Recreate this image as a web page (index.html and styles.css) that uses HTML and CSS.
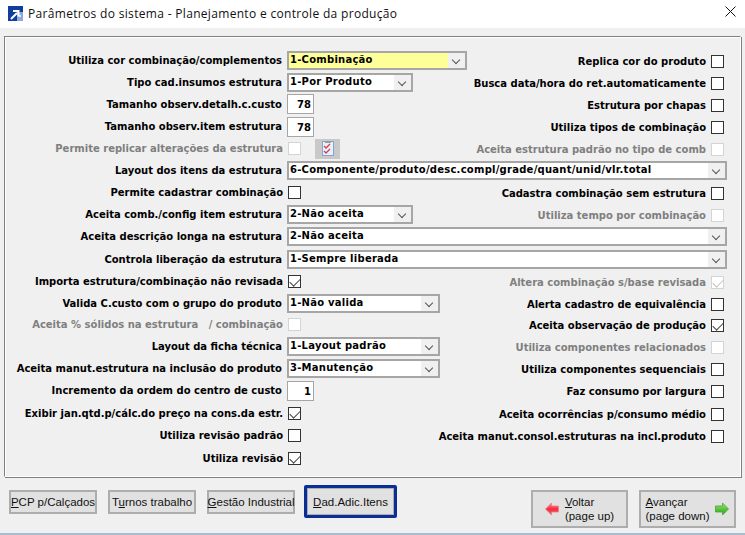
FILE: index.html
```html
<!DOCTYPE html>
<html lang="pt">
<head>
<meta charset="utf-8">
<title>Parâmetros do sistema</title>
<link rel="stylesheet" href="styles.css">
</head>
<body>
<div class="window">
  <header class="titlebar">
    <svg class="appicon" width="15" height="15" viewBox="0 0 15 15"><rect width="15" height="15" fill="#0f3f9e"/><rect x="9" y="6" width="6" height="9" fill="#8fa8d8"/><rect x="11" y="9" width="2" height="2" fill="#dfe8f6"/><path d="M3 13 L9 7 M5 5 H10.5 V10.5" fill="none" stroke="#fff" stroke-width="2"/></svg>
    <span class="title">Parâmetros do sistema - Planejamento e controle da produção</span>
    <svg class="close" width="11" height="11" viewBox="0 0 11 11"><path d="M0.5 0.5 L10.5 10.5 M10.5 0.5 L0.5 10.5" stroke="#111" stroke-width="1" fill="none"/></svg>
  </header>
  <main class="panel">
    <div class="form">
      <div class="left"><span class="lab">Utiliza cor combinação/complementos</span><div class="sel w180 yellow"><span class="val">1-Combinação</span><i class="arrow"></i></div></div>
      <div class="right"><span class="lab">Replica cor do produto</span><i class="cb"></i></div>

      <div class="left"><span class="lab">Tipo cad.insumos estrutura</span><div class="sel w126"><span class="val">1-Por Produto</span><i class="arrow"></i></div></div>
      <div class="right"><span class="lab">Busca data/hora do ret.automaticamente</span><i class="cb"></i></div>

      <div class="left"><span class="lab">Tamanho observ.detalh.c.custo</span><div class="num">78</div></div>
      <div class="right"><span class="lab">Estrutura por chapas</span><i class="cb"></i></div>

      <div class="left"><span class="lab">Tamanho observ.item estrutura</span><div class="num">78</div></div>
      <div class="right"><span class="lab">Utiliza tipos de combinação</span><i class="cb"></i></div>

      <div class="left"><span class="lab cblab off">Permite replicar alterações da estrutura</span><i class="cb off"></i>
        <div class="iconbtn"><svg width="12" height="15" viewBox="0 0 12 15"><rect x="0.5" y="0.5" width="11" height="14" fill="#e8f0fa" stroke="#7fa6d6"/><rect x="3" y="0" width="6" height="2" fill="#9a9a9a"/><path d="M2 5 L4 7 L8 3 M2 10 L4 12 L8 8" fill="none" stroke="#d8404a" stroke-width="1.3"/></svg></div></div>
      <div class="right"><span class="lab off">Aceita estrutura padrão no tipo de comb</span><i class="cb off"></i></div>

      <div class="full"><span class="lab">Layout dos itens da estrutura</span><div class="sel grow"><span class="val">6-Componente/produto/desc.compl/grade/quant/unid/vlr.total</span><i class="arrow"></i></div></div>

      <div class="left"><span class="lab cblab">Permite cadastrar combinação</span><i class="cb"></i></div>
      <div class="right"><span class="lab">Cadastra combinação sem estrutura</span><i class="cb"></i></div>

      <div class="left"><span class="lab">Aceita comb./config item estrutura</span><div class="sel w126"><span class="val">2-Não aceita</span><i class="arrow"></i></div></div>
      <div class="right"><span class="lab off">Utiliza tempo por combinação</span><i class="cb off"></i></div>

      <div class="full"><span class="lab">Aceita descrição longa na estrutura</span><div class="sel grow"><span class="val">2-Não aceita</span><i class="arrow"></i></div></div>

      <div class="full"><span class="lab">Controla liberação da estrutura</span><div class="sel grow"><span class="val">1-Sempre liberada</span><i class="arrow"></i></div></div>

      <div class="left"><span class="lab cblab">Importa estrutura/combinação não revisada</span><i class="cb on"></i></div>
      <div class="right"><span class="lab off">Altera combinação s/base revisada</span><i class="cb off on"></i></div>

      <div class="left"><span class="lab">Valida C.custo com o grupo do produto</span><div class="sel w153"><span class="val">1-Não valida</span><i class="arrow"></i></div></div>
      <div class="right"><span class="lab">Alerta cadastro de equivalência</span><i class="cb"></i></div>

      <div class="left"><span class="lab cblab off">Aceita % sólidos na estrutura&nbsp;&nbsp; / combinação</span><i class="cb off"></i></div>
      <div class="right"><span class="lab">Aceita observação de produção</span><i class="cb on"></i></div>

      <div class="left"><span class="lab">Layout da ficha técnica</span><div class="sel w153"><span class="val">1-Layout padrão</span><i class="arrow"></i></div></div>
      <div class="right"><span class="lab off">Utiliza componentes relacionados</span><i class="cb off"></i></div>

      <div class="left"><span class="lab">Aceita manut.estrutura na inclusão do produto</span><div class="sel w153"><span class="val">3-Manutenção</span><i class="arrow"></i></div></div>
      <div class="right"><span class="lab">Utiliza componentes sequenciais</span><i class="cb"></i></div>

      <div class="left"><span class="lab">Incremento da ordem do centro de custo</span><div class="num">1</div></div>
      <div class="right"><span class="lab">Faz consumo por largura</span><i class="cb"></i></div>

      <div class="left"><span class="lab cblab">Exibir jan.qtd.p/cálc.do preço na cons.da estr.</span><i class="cb on"></i></div>
      <div class="right"><span class="lab">Aceita ocorrências p/consumo médio</span><i class="cb"></i></div>

      <div class="left"><span class="lab cblab">Utiliza revisão padrão</span><i class="cb"></i></div>
      <div class="right"><span class="lab">Aceita manut.consol.estruturas na incl.produto</span><i class="cb"></i></div>

      <div class="left"><span class="lab cblab">Utiliza revisão</span><i class="cb on"></i></div>
    </div>
  </main>
  <footer class="actions">
    <div class="tabs">
      <button class="btn"><span><u>P</u>CP p/Calçados</span></button>
      <button class="btn"><span>T<u>u</u>rnos trabalho</span></button>
      <button class="btn"><span><u>G</u>estão Industrial</span></button>
      <div class="focus"><button class="btn inner"><span><u>D</u>ad.Adic.Itens</span></button></div>
    </div>
    <div class="nav">
      <button class="btn big">
        <svg width="14" height="14" viewBox="0 0 14 14"><defs><linearGradient id="r" x1="0" y1="0" x2="0" y2="1"><stop offset="0" stop-color="#ff8a8f"/><stop offset="0.5" stop-color="#fb2a3c"/><stop offset="1" stop-color="#e8606c"/></linearGradient></defs><path d="M0.5 7 L6.5 1 V4 H13.5 V10 H6.5 V13 Z" fill="url(#r)" stroke="#e88088" stroke-width="0.8"/></svg>
        <span class="two"><u>V</u>oltar<br>(page up)</span>
      </button>
      <button class="btn big">
        <span class="two"><u>A</u>vançar<br>(page down)</span>
        <svg width="14" height="14" viewBox="0 0 14 14"><defs><linearGradient id="g" x1="0" y1="0" x2="0" y2="1"><stop offset="0" stop-color="#a4ea80"/><stop offset="0.5" stop-color="#55c834"/><stop offset="1" stop-color="#3f9a34"/></linearGradient></defs><path d="M13.5 7 L7.5 1 V4 H0.5 V10 H7.5 V13 Z" fill="url(#g)" stroke="#4f9e3c" stroke-width="0.8"/></svg>
      </button>
    </div>
  </footer>
</div>
</body>
</html>
```
FILE: styles.css
```css
* { box-sizing: border-box; }
html, body { margin: 0; padding: 0; }
body { width: 745px; height: 535px; overflow: hidden; background: #f0f0f0; }
.window { width: 745px; height: 535px; display: flex; flex-direction: column; border-bottom: 2px solid #a9bdd0; }
.titlebar { height: 28px; background: #fff; display: flex; align-items: center; padding-left: 8px; color: #111; }
.appicon { flex: none; margin-top: -2px; }
.title { margin-left: 5px; margin-top: -1px; font: 12px "Open Sans", sans-serif; letter-spacing: 0.32px; flex: 1; }
.close { margin-right: 9px; margin-top: -5px; }
.panel { margin: 8px 4px 0 4px; height: 441px; border: 1px solid #808080; border-right-color: #fff; border-bottom-color: #fff; box-shadow: inset 1px 1px 0 #fff, 1px 1px 0 #808080; }
.form { display: grid; grid-template-columns: 463px 272px; grid-template-rows: 22px 22px 22px 23px 21px 23px 21px 22px 22px 24px 21px 22px 21px 22px 22px 23px 22px 23px 22px; padding-top: 12px; font: bold 10px "DejaVu Sans", sans-serif; color: #000; }
.left, .right, .full { display: flex; align-items: center; min-width: 0; }
.full { grid-column: 1 / span 2; }
.right { justify-content: flex-end; padding-right: 16px; padding-top: 2px; }
.lab { white-space: nowrap; }
.left > .lab, .full > .lab { width: 277px; text-align: right; margin-right: 5px; flex: none; }
.left > .cblab { width: 278px; margin-right: 5px; }
.right > .lab { margin-right: 5px; }
.off { color: #7f7f7f; }
.cb { flex: none; width: 13px; height: 13px; background: #fff; border: 1px solid #333; position: relative; display: block; }
.cb.off { border-color: #d4d4d4; }
.cb.on::after { content: ""; position: absolute; left: 1px; top: 0; width: 9px; height: 5px; border-left: 1px solid #444; border-bottom: 1px solid #444; transform: translate(0, 2px) rotate(-45deg) ; }
.cb.off.on::after { border-color: #c4c4c4; }
.sel { flex: none; height: 19px; border: 2px solid #a6a6a6; background: #fff; display: flex; align-items: center; }
.w180 { width: 180px; }
.w126 { width: 126px; }
.w153 { width: 153px; }
.grow { width: 440px; }
.yellow { background: #ffff99; }
.val { flex: 1; padding: 0 0 2px 1px; white-space: nowrap; overflow: hidden; letter-spacing: 0.25px; }
.arrow { flex: none; width: 17px; height: 100%; background: #f0f0f0; position: relative; display: block; }
.arrow::after { content: ""; position: absolute; left: 5px; top: 4px; width: 5px; height: 5px; border-right: 1px solid #555; border-bottom: 1px solid #555; transform: rotate(45deg); }
.num { flex: none; width: 27px; height: 20px; background: #fff; border: 1px solid #a6a6a6; text-align: right; padding: 4px 2px 0 0; }
.iconbtn { flex: none; width: 25px; height: 20px; margin-left: 14px; background: #c9c9c9; display: flex; align-items: center; justify-content: center; }
.actions { flex: 1; display: flex; justify-content: space-between; padding: 0 9px 0 9px; align-items: flex-start; }
.tabs { display: flex; align-items: center; height: 33px; margin-top: 8px; }
.btn { font: 11.5px "Liberation Sans", sans-serif; color: #111; width: 88px; height: 24px; background: #e1e1e1; border: 2px solid #adadad; padding: 0; margin-right: 11px; white-space: nowrap; display: inline-flex; align-items: center; justify-content: center; }
.focus { width: 93px; height: 33px; border: 3px solid #0a2d96; border-radius: 2px; margin-left: -2px; padding: 0; }
.btn.inner { width: 87px; height: 27px; border: 1px solid #adadad; margin: 0; }
.nav { display: flex; gap: 11px; margin-top: 13px; }
.btn.big { width: 97px; height: 38px; margin: 0; gap: 6px; line-height: 14px; }
.two { text-align: left; }
```
